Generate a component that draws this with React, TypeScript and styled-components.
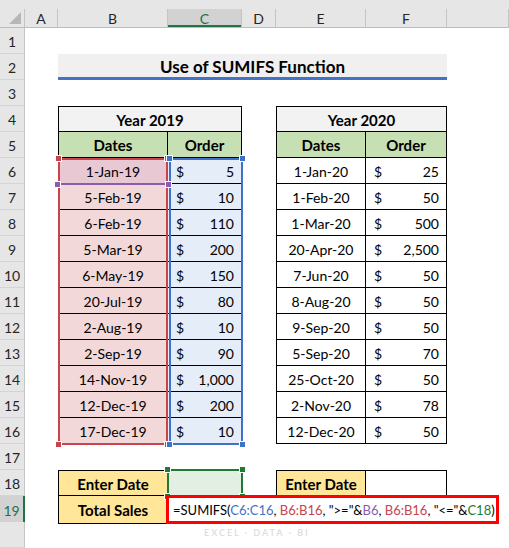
import React from 'react';
import styled, { createGlobalStyle, css } from 'styled-components';

const GlobalStyle = createGlobalStyle`
  html, body { margin: 0; padding: 0; background: #fff; }
  body { font-family: Lato, "Liberation Sans", sans-serif; }
`;

const TEMPLATE = '25px 33px 110px 74px 34px 90px 81px 1fr';
const COL_LEFT: Record<string, number> = { A: 25, B: 58, C: 168, D: 242, E: 276, F: 366, G: 447 };
const rowTop = (r: number) => 28 + (r - 1) * 26;

const Page = styled.div`
  position: relative;
  width: 509px;
  height: 548px;
  overflow: hidden;
  background: #fff;
`;

const TopBand = styled.div`
  height: 9px;
  background: #e6e6e6;
`;

const HeaderRow = styled.div`
  display: grid;
  grid-template-columns: ${TEMPLATE};
  height: 19px;
  background: #e6e6e6;
  border-bottom: 1px solid #bdbdbd;
  box-sizing: border-box;
`;

const Corner = styled.div`
  display: flex;
  align-items: flex-end;
  justify-content: flex-end;
  padding: 0 3px 3px 0;
  border-right: 1px solid #c4c4c4;
`;

const CornerTriangle = styled.div`
  width: 12px;
  height: 12px;
  background: #b7b7b7;
  clip-path: polygon(100% 0, 100% 100%, 0 100%);
`;

const ColHead = styled.div<{ $sel?: boolean }>`
  display: flex;
  align-items: center;
  justify-content: center;
  font-size: 14px;
  color: ${p => (p.$sel ? '#217346' : '#262626')};
  background: ${p => (p.$sel ? '#d2d2d2' : 'transparent')};
  border-right: 1px solid #c4c4c4;
  box-shadow: ${p => (p.$sel ? 'inset 0 -2px 0 #217346' : 'none')};
  padding-top: 1px;
`;

const Row = styled.div`
  display: grid;
  grid-template-columns: ${TEMPLATE};
  height: 26px;
`;

const RowHead = styled.div<{ $sel?: boolean }>`
  grid-column: 1;
  display: flex;
  align-items: center;
  justify-content: center;
  box-sizing: border-box;
  background: ${p => (p.$sel ? '#d2d2d2' : '#e6e6e6')};
  color: ${p => (p.$sel ? '#217346' : '#262626')};
  border-right: ${p => (p.$sel ? '2px solid #217346' : '1px solid #c4c4c4')};
  border-bottom: 1px solid #d4d4d4;
  font-size: 14px;
  padding-top: 2px;
`;

type CellProps = { $col: number; $span?: number; $first?: boolean; $top?: boolean; $bg?: string };

const cellBase = css<CellProps>`
  grid-column: ${p => p.$col} / span ${p => p.$span ?? 1};
  box-sizing: border-box;
  display: flex;
  align-items: center;
  border-right: 1px solid #000;
  border-bottom: 1px solid #000;
  ${p => (p.$first ? 'border-left: 1px solid #000;' : '')}
  ${p => (p.$top ? 'border-top: 1px solid #000;' : '')}
  background: ${p => p.$bg ?? '#fff'};
  font-size: 14px;
  color: #000;
  padding-top: 1px;
`;

const TitleCell = styled.div`
  grid-column: 3 / 8;
  display: flex;
  align-items: center;
  justify-content: center;
  box-sizing: border-box;
  background: #f0f0f0;
  border-bottom: 3px solid #4472c4;
  font-size: 17px;
  font-weight: 700;
  color: #000;
  padding-top: 2px;
`;

const YearCell = styled.div<CellProps>`
  ${cellBase};
  justify-content: center;
  font-weight: 700;
  font-size: 15px;
`;

const HeadCell = styled.div<CellProps>`
  ${cellBase};
  justify-content: center;
  font-weight: 700;
  font-size: 15px;
`;

const DateCell = styled.div<CellProps>`
  ${cellBase};
  justify-content: center;
`;

const AmountCell = styled.div<CellProps>`
  ${cellBase};
  justify-content: space-between;
  padding-left: 8px;
  padding-right: 7px;
`;

const LabelCell = styled.div<CellProps>`
  ${cellBase};
  justify-content: center;
  font-weight: 700;
  font-size: 15px;
`;

const InputCell = styled.div<CellProps>`
  ${cellBase};
`;

const FormulaBox = styled.div`
  grid-column: 4 / 9;
  position: relative;
  z-index: 2;
  margin: -1px 10px 0 -2px;
  height: 29px;
  box-sizing: border-box;
  border: 3px solid #ff0000;
  background: #fff;
  display: flex;
  align-items: center;
  padding: 1px 0 0 4px;
  font-size: 13px;
  color: #000;
  white-space: pre;
`;

const Ref = styled.span<{ $c: string }>`
  color: ${p => p.$c};
`;

const RefBox = styled.div<{ $top: number; $left: number; $w: number; $h: number; $c: string; $only?: 'bottom' }>`
  position: absolute;
  z-index: 1;
  top: ${p => p.$top}px;
  left: ${p => p.$left}px;
  width: ${p => p.$w}px;
  height: ${p => p.$h}px;
  box-sizing: border-box;
  pointer-events: none;
  ${p =>
    p.$only === 'bottom'
      ? `border-bottom: 2px solid ${p.$c};`
      : `border: 2px solid ${p.$c};`}
`;

const Handle = styled.div<{ $c: string; $x: 'l' | 'r'; $y: 't' | 'b'; $flat?: boolean }>`
  position: absolute;
  width: 5px;
  height: 5px;
  background: ${p => p.$c};
  border: 1px solid #fff;
  ${p => (p.$x === 'l' ? `left: ${p.$flat ? -4 : -5}px;` : `right: ${p.$flat ? -4 : -5}px;`)}
  ${p => (p.$y === 't' ? 'top: -5px;' : 'bottom: -5px;')}
`;

const Watermark = styled.div`
  position: absolute;
  z-index: 3;
  left: 204px;
  top: 527px;
  pointer-events: none;
`;

const WaterTag = styled.div`
  font-size: 9px;
  font-weight: 700;
  letter-spacing: 2px;
  color: rgba(150, 160, 175, 0.35);
  line-height: 12px;
`;

const RED = '#c8434b';
const BLUE = '#3f72c6';
const PURPLE = '#8a5cb0';
const GREEN = '#1e7b34';

const data2019: [string, string][] = [
  ['1-Jan-19', '5'], ['5-Feb-19', '10'], ['6-Feb-19', '110'], ['5-Mar-19', '200'],
  ['6-May-19', '150'], ['20-Jul-19', '80'], ['2-Aug-19', '10'], ['2-Sep-19', '90'],
  ['14-Nov-19', '1,000'], ['12-Dec-19', '200'], ['17-Dec-19', '10'],
];
const data2020: [string, string][] = [
  ['1-Jan-20', '25'], ['1-Feb-20', '50'], ['1-Mar-20', '500'], ['20-Apr-20', '2,500'],
  ['7-Jun-20', '50'], ['8-Aug-20', '50'], ['9-Sep-20', '50'], ['5-Sep-20', '70'],
  ['25-Oct-20', '50'], ['2-Nov-20', '78'], ['12-Dec-20', '50'],
];

const Corners = ({ c }: { c: string }) => (
  <>
    <Handle $c={c} $x="l" $y="t" />
    <Handle $c={c} $x="r" $y="t" />
    <Handle $c={c} $x="l" $y="b" />
    <Handle $c={c} $x="r" $y="b" />
  </>
);

export default function App() {
  const cols = ['A', 'B', 'C', 'D', 'E', 'F', ''];
  return (
    <>
      <GlobalStyle />
      <Page>
        <TopBand />
        <HeaderRow>
          <Corner>
            <CornerTriangle />
          </Corner>
          {cols.map((c, i) => (
            <ColHead key={i} $sel={c === 'C'}>
              {c}
            </ColHead>
          ))}
        </HeaderRow>

        <Row>
          <RowHead>1</RowHead>
        </Row>
        <Row>
          <RowHead>2</RowHead>
          <TitleCell>Use of SUMIFS Function</TitleCell>
        </Row>
        <Row>
          <RowHead>3</RowHead>
        </Row>
        <Row>
          <RowHead>4</RowHead>
          <YearCell $col={3} $span={2} $first $top $bg="#f2f2f2">Year 2019</YearCell>
          <YearCell $col={6} $span={2} $first $top $bg="#f2f2f2">Year 2020</YearCell>
        </Row>
        <Row>
          <RowHead>5</RowHead>
          <HeadCell $col={3} $first $bg="#c6e0b4">Dates</HeadCell>
          <HeadCell $col={4} $bg="#c6e0b4">Order</HeadCell>
          <HeadCell $col={6} $first $bg="#c6e0b4">Dates</HeadCell>
          <HeadCell $col={7} $bg="#c6e0b4">Order</HeadCell>
        </Row>
        {data2019.map(([d, v], i) => (
          <Row key={d}>
            <RowHead>{i + 6}</RowHead>
            <DateCell $col={3} $first $bg={i === 0 ? '#e8c8d3' : '#f2d8d9'}>{d}</DateCell>
            <AmountCell $col={4} $bg="#e4edf8">
              <span>$</span>
              <span>{v}</span>
            </AmountCell>
            <DateCell $col={6} $first>{data2020[i][0]}</DateCell>
            <AmountCell $col={7}>
              <span>$</span>
              <span>{data2020[i][1]}</span>
            </AmountCell>
          </Row>
        ))}
        <Row>
          <RowHead>17</RowHead>
        </Row>
        <Row>
          <RowHead>18</RowHead>
          <LabelCell $col={3} $first $top $bg="#ffe699">Enter Date</LabelCell>
          <InputCell $col={4} $top $bg="#e3efe3" />
          <LabelCell $col={6} $first $top $bg="#ffe699">Enter Date</LabelCell>
          <InputCell $col={7} $top />
        </Row>
        <Row>
          <RowHead $sel>19</RowHead>
          <LabelCell $col={3} $first $bg="#ffe699">Total Sales</LabelCell>
          <FormulaBox>
            <span>
              {'=SUMIFS('}
              <Ref $c={BLUE}>C6:C16</Ref>
              {', '}
              <Ref $c={RED}>B6:B16</Ref>
              {', ">="&'}
              <Ref $c={PURPLE}>B6</Ref>
              {', '}
              <Ref $c={RED}>B6:B16</Ref>
              {', "<="&'}
              <Ref $c={GREEN}>C18</Ref>
              {')'}
            </span>
          </FormulaBox>
        </Row>
        <Row>
          <RowHead />
        </Row>

        <RefBox $top={rowTop(6)} $left={COL_LEFT.B} $w={110} $h={287} $c={RED}>
          <Corners c={RED} />
        </RefBox>
        <RefBox $top={rowTop(6)} $left={COL_LEFT.C + 1} $w={74} $h={287} $c={BLUE}>
          <Corners c={BLUE} />
        </RefBox>
        <RefBox $top={rowTop(6)} $left={COL_LEFT.B} $w={110} $h={27} $c={PURPLE} $only="bottom">
          <Handle $c={PURPLE} $x="l" $y="b" $flat />
          <Handle $c={PURPLE} $x="r" $y="b" $flat />
        </RefBox>
        <RefBox $top={rowTop(18) - 1} $left={COL_LEFT.C - 1} $w={76} $h={28} $c={GREEN}>
          <Corners c={GREEN} />
        </RefBox>

        <Watermark>
          <WaterTag>EXCEL · DATA · BI</WaterTag>
        </Watermark>
      </Page>
    </>
  );
}
